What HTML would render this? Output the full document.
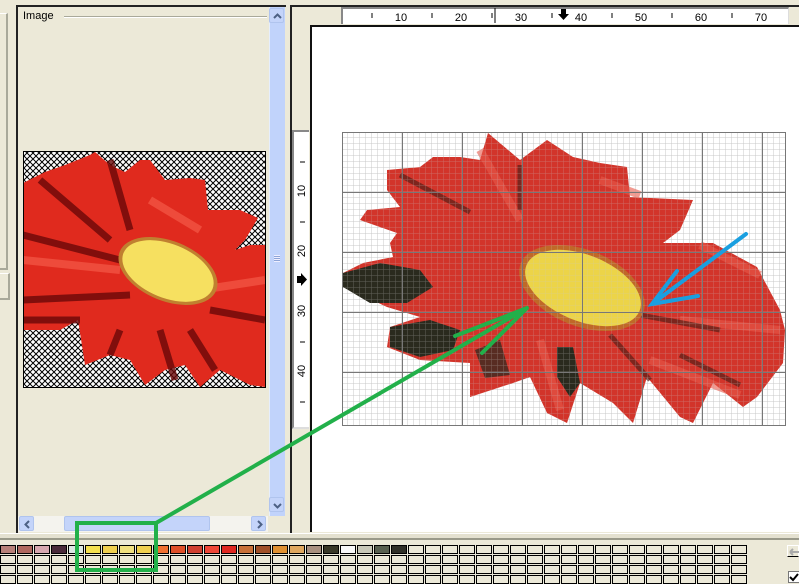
<!DOCTYPE html>
<html><head><meta charset="utf-8"><style>
*{margin:0;padding:0;box-sizing:border-box}
body{width:799px;height:581px;overflow:hidden;background:#ece9d8;position:relative;font-family:Tahoma,"Liberation Sans","DejaVu Sans",sans-serif;font-size:11px}
.a{position:absolute}
.btn{position:absolute;background:#c4d4fa;border:1px solid #b0c4ee;border-radius:2px}
</style></head><body>
<!-- left strip -->
<div class="a" style="left:-2px;top:13px;width:10px;height:257px;border:1px solid #fff;border-right:2px solid #a9a99a;border-bottom:2px solid #a9a99a"></div>
<div class="a" style="left:-2px;top:273px;width:12px;height:27px;border:1px solid #fff;border-right:2px solid #a9a99a;border-bottom:2px solid #a9a99a"></div>
<!-- left panel -->
<div class="a" style="left:16px;top:5px;width:270px;height:528px;border-left:2px solid #222;border-top:2px solid #222"></div>
<div class="a" style="left:23px;top:10px;font-size:11px;color:#000">Image</div>
<div class="a" style="left:64px;top:16px;width:203px;height:2px;border-top:1px solid #a9a99a;border-bottom:1px solid #fff"></div>
<!-- v scrollbar -->
<div class="a" style="left:269px;top:7px;width:16px;height:509px;background:#c1d3fb;border-left:1px solid #e6eefc"></div>
<div class="btn" style="left:269px;top:8px;width:15px;height:15px"><svg width="15" height="15" class="a" style="left:0;top:0"><path d="M4 9 L7.5 5.5 L11 9" stroke="#4d6185" stroke-width="2" fill="none"/></svg></div>
<div class="btn" style="left:269px;top:497px;width:15px;height:15px"><svg width="15" height="15" class="a" style="left:0;top:0"><path d="M4 6 L7.5 9.5 L11 6" stroke="#4d6185" stroke-width="2" fill="none"/></svg></div>
<div class="a" style="left:274px;top:255px;width:6px;height:7px;border-top:1px solid #eef;border-bottom:1px solid #eef;background:repeating-linear-gradient(#8ea5d8 0 1px,#eef 1px 2px)"></div>
<!-- h scrollbar -->
<div class="a" style="left:18px;top:516px;width:250px;height:16px;background:#f4f3ee"></div>
<div class="btn" style="left:19px;top:516px;width:15px;height:15px"><svg width="15" height="15" class="a"><path d="M9 4 L5.5 7.5 L9 11" stroke="#4d6185" stroke-width="2" fill="none"/></svg></div>
<div class="btn" style="left:251px;top:516px;width:15px;height:15px"><svg width="15" height="15" class="a"><path d="M6 4 L9.5 7.5 L6 11" stroke="#4d6185" stroke-width="2" fill="none"/></svg></div>
<div class="btn" style="left:64px;top:516px;width:146px;height:15px"></div>
<!-- thumbnail -->
<svg class="a" style="left:23px;top:151px" width="243" height="237" viewBox="23 151 243 237">
<defs><pattern id="ch" width="6" height="6" patternUnits="userSpaceOnUse"><rect width="6" height="6" fill="#fff"/><path d="M0 0L6 6M6 0L0 6" stroke="#000" stroke-width="1"/></pattern></defs>
<rect x="23" y="151" width="243" height="237" fill="url(#ch)"/>
<polygon points="23,183 45,172 65,165 90,155 95,152 110,165 125,172 140,160 150,160 165,180 190,178 205,180 208,210 240,210 258,218 245,240 235,250 250,245 265,245 265,387 250,385 220,370 200,387 185,365 165,370 145,385 130,360 110,355 85,365 78,320 60,330 23,330" fill="#e02a1e"/>
<path d="M40 180 L110 240 M23 235 L120 260 M23 300 L130 295 M23 320 L80 320 M110 160 L130 230 M160 330 L175 380 M190 330 L215 370 M210 310 L265 320 M120 330 L110 355" stroke="#6a0808" stroke-width="7" opacity="0.8"/>
<path d="M23 260 L120 270 M150 200 L200 230 M200 290 L265 280" stroke="#f45a48" stroke-width="8" opacity="0.7"/>
<ellipse cx="168" cy="271" rx="52" ry="30" transform="rotate(22 168 271)" fill="#c08030"/>
<ellipse cx="168" cy="271" rx="48" ry="27" transform="rotate(22 168 271)" fill="#f6e060"/>
<rect x="23.5" y="151.5" width="242" height="236" fill="none" stroke="#000"/>
</svg>
<!-- right panel -->
<div class="a" style="left:290px;top:5px;width:509px;height:528px;border-left:2px solid #222;border-top:2px solid #222"></div>
<div class="a" style="left:341px;top:7px;width:448px;height:17px;background:#fff;border-left:2px solid #888;border-top:2px solid #888;border-right:1px solid #ddd"></div>
<div class="a" style="left:310px;top:25px;width:489px;height:507px;background:#fff;border-left:2px solid #111;border-top:2px solid #111"></div>
<div class="a" style="left:292px;top:130px;width:17px;height:299px;background:#fff;border-left:2px solid #888;border-top:2px solid #888;border-bottom:2px solid #ddd"></div>
<svg class="a" style="left:0;top:0" width="799" height="581">
<g font-family="Liberation Sans, sans-serif" font-size="11" fill="#000" text-anchor="middle">
<text x="401" y="21">10</text><text x="461" y="21">20</text><text x="521" y="21">30</text><text x="581" y="21">40</text><text x="641" y="21">50</text><text x="701" y="21">60</text><text x="761" y="21">70</text>
<text transform="translate(305,191) rotate(-90)">10</text><text transform="translate(305,251) rotate(-90)">20</text><text transform="translate(305,311) rotate(-90)">30</text><text transform="translate(305,371) rotate(-90)">40</text>
</g>
<path d="M372 13v5M432 13v5M492 13v5M552 13v5M612 13v5M672 13v5M732 13v5M300 162h5M300 222h5M300 342h5M300 402h5" stroke="#000"/>
<path d="M495 8v15" stroke="#000"/>
<path d="M561 9h5v5h3l-5.5 6l-5.5-6h3z" fill="#000"/>
<path d="M297 276v7h4v3l6-6.5l-6-6.5v3z" fill="#000"/>
<defs>
<pattern id="g" x="342" y="132" width="6" height="6" patternUnits="userSpaceOnUse"><path d="M6 0V6H0" stroke="#c8c8c8" fill="none" stroke-width="1"/></pattern>
<pattern id="G" x="342" y="132" width="60" height="60" patternUnits="userSpaceOnUse"><path d="M0.5 0V60M0 0.5H60" stroke="#777" fill="none"/></pattern>
</defs>
<rect x="342" y="132" width="444" height="294" fill="url(#g)"/>
<polygon points="488,133 520,160 547,140 573,157 600,163 627,167 630,197 693,200 680,230 663,243 713,243 757,267 780,310 785,330 783,363 757,397 743,407 713,383 693,423 680,417 647,377 633,423 613,403 580,383 567,423 547,413 530,377 513,383 470,397 470,363 420,360 387,347 390,327 420,317 387,307 357,293 343,283 343,273 363,263 393,257 390,243 397,233 360,220 367,210 400,207 387,190 387,170 420,167 433,157 460,157 480,160" fill="#d2342a"/>
<path d="M700 245 L760 275 M600 180 L640 195 M480 150 L520 220 M680 320 L780 330 M650 360 L740 395 M540 340 L560 410" stroke="#e85a4a" stroke-width="8" opacity="0.6"/>
<path d="M400 175 L470 212 M520 165 L520 210 M640 315 L720 330 M610 335 L650 380 M680 355 L740 385" stroke="#5a2018" stroke-width="5" opacity="0.7"/>
<polygon points="343,273 380,263 420,270 433,287 407,303 370,303 343,287" fill="#2a2a1e"/>
<polygon points="390,327 430,320 460,330 453,350 420,357 390,347" fill="#2a2a1e"/>
<polygon points="557,347 573,347 580,383 570,397 557,377" fill="#2a2a1e"/>
<polygon points="475,350 500,340 510,375 485,378" fill="#3a2a20" opacity="0.8"/>
<ellipse cx="582" cy="288" rx="66" ry="38" transform="rotate(22 582 288)" fill="#c06828"/>
<ellipse cx="583" cy="288" rx="61" ry="33" transform="rotate(22 583 288)" fill="#ecd448"/>
<rect x="342" y="132" width="444" height="294" fill="url(#g)" opacity="0.35"/>
<rect x="342" y="132" width="444" height="294" fill="url(#G)"/>
<rect x="342.5" y="132.5" width="443" height="293" fill="none" stroke="#777"/>
<g stroke="#1a9fe0" stroke-width="4" stroke-linecap="round" fill="none"><path d="M746 234 L652 304 M677 271 L652 304 L698 296"/></g>
</svg>
<!-- separator -->
<div class="a" style="left:0;top:533px;width:799px;height:7px;border-top:1px solid #fff;border-bottom:2px solid #9a9a8a;background:#e4e1d0"></div>
<!-- palette -->
<div class="a" id="pal" style="left:0;top:545px;width:750px;height:36px"></div>
<div class="a" style="left:787px;top:545px;width:12px;height:12px;background:#ece9d8;border:1px solid #fff;border-bottom:1px solid #000"><svg width="12" height="12" class="a" style="left:0;top:0"><path d="M2 6h9M2 6l3-3M2 6l3 3" stroke="#aaa" stroke-width="2"/></svg></div>
<div class="a" style="left:788px;top:571px;width:12px;height:12px;background:#fff;border:1px solid #777"><svg width="11" height="11" class="a"><path d="M1 5l3 3l5-6" stroke="#000" stroke-width="2" fill="none"/></svg></div>
<svg class="a" style="left:0;top:0;z-index:5" width="799" height="581">
<g stroke="#22b04a" stroke-width="4" stroke-linecap="round" fill="none"><path d="M156 523 L527 308 M455 336 L527 308 L482 353"/>
<rect x="77" y="523" width="79" height="47" stroke-linecap="butt"/></g>
</svg>
<script>
var c=["#b88078","#b06860","#d8a8b0","#4a2a3a","#dce8e4","#f4e050","#f0d050","#f0e080","#f0d050","#f07030","#e05028","#d04030","#f04838","#e02820","#c87038","#a05028","#e09030","#e0a860","#a89080","#383828","#f8f8f8","#c8c8b8","#586050","#303028"];
var h="";for(var r=0;r<4;r++)for(var i=0;i<44;i++){var col=(r==0&&i<c.length)?c[i]:"#ece9d8";h+='<div style="position:absolute;left:'+(i*17)+'px;top:'+(r*10)+'px;width:16px;height:9px;border:1.5px solid #000;background:'+col+'"></div>';}
document.getElementById("pal").innerHTML=h;
</script>
</body></html>
